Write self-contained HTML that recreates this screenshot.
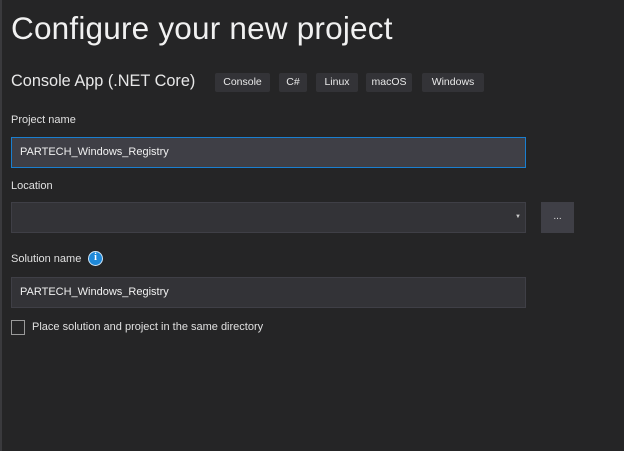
<!DOCTYPE html>
<html><head><style>
*{margin:0;padding:0;box-sizing:border-box}
body{width:624px;height:451px;background:#252526;font-family:"Liberation Sans",sans-serif;color:#f1f1f1;position:relative;overflow:hidden}
.a{position:absolute}
.tag{position:absolute;top:73px;height:19px;background:#333337;color:#e8e8e8;font-size:10.5px;line-height:19px;text-align:center;border-radius:2px}
.lbl{font-size:11px;color:#e0e0e0}
.box{position:absolute;left:11px;width:515px;height:31px;border:1px solid #3f3f46;background:#2d2d30;font-size:11px;line-height:29px;padding-left:8px;color:#f1f1f1}
</style></head><body>
<div class="a" style="left:0;top:0;width:2px;height:451px;background:#3a3a3d"></div>
<div class="a" style="left:11px;top:10px;font-size:31.5px;color:#f1f1f1;letter-spacing:0.2px">Configure your new project</div>
<div class="a" style="left:11px;top:72px;font-size:16.3px;color:#e8e8e8">Console App (.NET Core)</div>
<div class="tag" style="left:215px;width:55px">Console</div>
<div class="tag" style="left:279px;width:28px">C#</div>
<div class="tag" style="left:316px;width:42px">Linux</div>
<div class="tag" style="left:366px;width:46px">macOS</div>
<div class="tag" style="left:422px;width:62px">Windows</div>
<div class="a lbl" style="left:11px;top:114px">Project name</div>
<div class="box" style="top:137px;background:#3f3f46;border:1px solid #1a7fd0">PARTECH_Windows_Registry</div>
<div class="a lbl" style="left:11px;top:180px">Location</div>
<div class="box" style="top:202px;background:#333337"></div>
<div class="a" style="left:515px;top:214px;font-size:6px;color:#ccc">▼</div>
<div class="a" style="left:541px;top:202px;width:33px;height:31px;background:#3f3f46;font-size:10px;text-align:center;line-height:29px;color:#ddd">...</div>
<div class="a lbl" style="left:11px;top:253px">Solution name</div>
<div class="a" style="left:88px;top:251px;width:15px;height:15px;border-radius:50%;background:#1e88d8;border:1.5px solid #cfe6f8;color:#fff;font-size:10px;font-weight:bold;text-align:center;line-height:12px;font-family:'Liberation Serif',serif">i</div>
<div class="box" style="top:277px;background:#333337">PARTECH_Windows_Registry</div>
<div class="a" style="left:11px;top:320px;width:14px;height:15px;border:1px solid #9a9a9a;background:#252526"></div>
<div class="a lbl" style="left:32px;top:321px">Place solution and project in the same directory</div>
</body></html>
